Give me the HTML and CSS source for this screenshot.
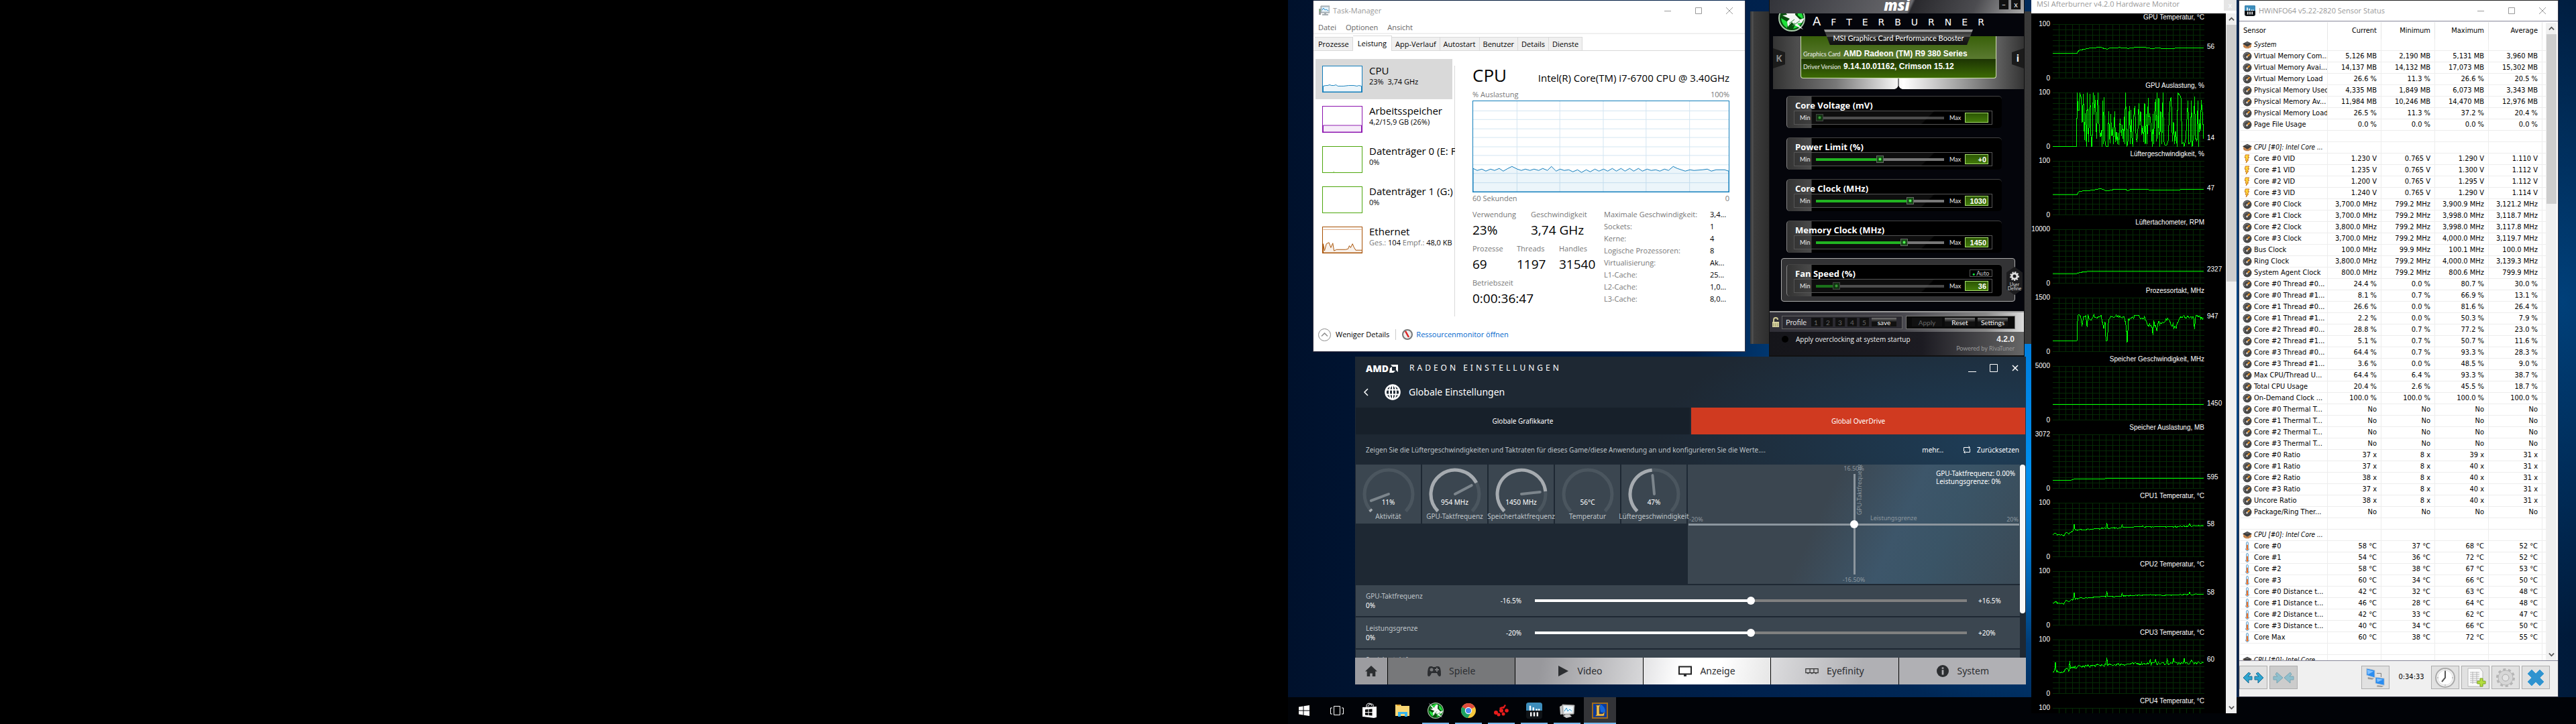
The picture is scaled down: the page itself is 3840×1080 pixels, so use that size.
FILE: index.html
```html
<!DOCTYPE html>
<html lang="de">
<head>
<meta charset="utf-8">
<title>Desktop</title>
<link rel="stylesheet" href="styles.css">
</head>
<body>
<svg class="sprite" aria-hidden="true">
  <symbol id="i-taskmgr" viewBox="0 0 16 16"><path d="M0 5h3v9H0z" fill="#9a9a9a"/><path d="M1 6h1v3H1z" fill="#5fd35f"/><path d="M3 1h13v10H3z" fill="#c9d3da" stroke="#8a949b"/><path d="M5 3h9v6H5z" fill="#eaf6fd"/><path d="M5 7l2-3 2 3 2-1 3 2" fill="none" stroke="#2a8fd0"/><path d="M8 11h3v2h3v2H5v-2h3z" fill="#a5adb2"/></symbol>
  <symbol id="i-min" viewBox="0 0 12 12"><path d="M1 6.500h10" stroke="currentColor" fill="none"/></symbol>
  <symbol id="i-max" viewBox="0 0 12 12"><path d="M1.500 1.500h9v9h-9z" stroke="currentColor" fill="none"/></symbol>
  <symbol id="i-close" viewBox="0 0 12 12"><path d="M1 1l10 10M11 1L1 11" stroke="currentColor" fill="none"/></symbol>
  <symbol id="i-gauge" viewBox="0 0 14 14"><circle cx="7" cy="7" r="6.500" fill="#484848"/><path d="M3 9.500A4.500 4.500 0 0 1 9 3" fill="none" stroke="#999" stroke-width="1.200" stroke-dasharray="1.500 1"/><path d="M6.500 8L10.500 4" stroke="#f39a2c" stroke-width="1.800"/><circle cx="6.500" cy="8" r="1.500" fill="#ccc"/></symbol>
  <symbol id="i-chip" viewBox="0 0 16 14"><path d="M1 5l7 4v4l-2 0-5-3zM15 5L8 9v4l2 0 5-3z" fill="#e0a068"/><path d="M3 8v4M5.500 9v4M8 10v3M10.500 9v4M13 8v4" stroke="#9a5b2b"/><path d="M0 5l8-4 8 4-8 5z" fill="#3c3c3c"/><path d="M4 4l4-2 4 2-4 1z" fill="#666"/></symbol>
  <symbol id="i-bolt" viewBox="0 0 10 15"><path d="M2 1h6l-2 4h2L5 9h2L3 14l1-4H2l1-4H1z" fill="#ffd83a" stroke="#c9731a"/></symbol>
  <symbol id="i-temp" viewBox="0 0 10 15"><path d="M3.500 2a1.500 1.500 0 0 1 3 0v8a2.500 2.500 0 1 1-3 0z" fill="#eaf4fc" stroke="#5c9cc8"/><path d="M5 5v7" stroke="#f26a1b" stroke-width="2"/><circle cx="5" cy="12" r="1.600" fill="#f26a1b"/></symbol>
  <symbol id="i-hwinfo" viewBox="0 0 20 20"><rect width="20" height="20" rx="3" fill="#101418"/><path d="M3 0h14a3 3 0 0 1 3 3v7H0V3a3 3 0 0 1 3-3z" fill="#3d8dbb"/><path d="M4 4h2v6H4zM8 6h2v4H8zM12 8h2v2h-2zM15 8h2v2h-2zM5 12h2v5H5zM9 12h2v5H9zM13 12h2v5h-2z" fill="#fff"/></symbol>
  <symbol id="i-jet" viewBox="0 0 40 40"><circle cx="20" cy="20" r="19" fill="#064d0c" stroke="#a9c9aa" stroke-width="2"/><path d="M6 12q6-8 18-9l-2 8zM28 6q9 6 9 16l-8-6zM4 20q1 10 9 15l1-9zM22 36q8-1 13-9l-9 1z" fill="#1fe03a"/><path d="M3 1L16 13L21 6L26 5L25 15L32 22L39 20L35 27L28 28L37 37L25 31L20 26L14 33L13 25L17 21L6 16L13 15Z" fill="#f3f6f3"/><path d="M16 28L24 22M22 31L32 24M24 27l-3 5" stroke="#2a8a36" fill="none"/></symbol>
</svg>

<main class="desktop">
<section class="screen screen-off" aria-label="Monitor 1"></section>
<section class="screen screen-on" aria-label="Monitor 2">

<!-- Task-Manager -->
<article class="win taskmgr">
  <header class="titlebar">
    <svg class="ic16"><use href="#i-taskmgr"/></svg><span class="title">Task-Manager</span>
    <button aria-label="Minimieren"><svg><use href="#i-min"/></svg></button>
    <button aria-label="Maximieren"><svg><use href="#i-max"/></svg></button>
    <button aria-label="Schließen"><svg><use href="#i-close"/></svg></button>
  </header>
  <nav class="menu"><button>Datei</button><button>Optionen</button><button>Ansicht</button></nav>
  <nav class="tabs"><button>Prozesse</button><button class="on">Leistung</button><button>App-Verlauf</button><button>Autostart</button><button>Benutzer</button><button>Details</button><button>Dienste</button></nav>
  <div class="tm-body">
    <ul class="res">
      <li class="sel"><svg class="thumb blue" viewBox="0 0 60 40"><path class="area" d="M0 31l4-1 3 0 3-1 3 1 4 0 3-1 3 2h5l4 0 8-1h8l5 1 3-1 4 1V40H0z"/></svg><div><h3>CPU</h3><p>23%&nbsp; 3,74 GHz</p></div></li>
      <li><svg class="thumb purple" viewBox="0 0 60 40"><path class="area" d="M0 29.500H60V40H0z"/></svg><div><h3>Arbeitsspeicher</h3><p>4,2/15,9 GB (26%)</p></div></li>
      <li><svg class="thumb green" viewBox="0 0 60 40"><path class="area" d="M16 39h1"/></svg><div><h3>Datenträger 0 (E: F</h3><p>0%</p></div></li>
      <li><svg class="thumb green" viewBox="0 0 60 40"></svg><div><h3>Datenträger 1 (G:)</h3><p>0%</p></div></li>
      <li><svg class="thumb brown" viewBox="0 0 60 40"><path class="area" d="M0 26l2 11 3-11 4-2 3 8 3-7 2 12 4-2h14l4-1 2-5 2 3 3-6 2 5 3 5h10V40H0z"/><path d="M0 3.500H60" stroke="#d9a37c"/></svg><div><h3>Ethernet</h3><p><i>Ges.:</i> 104 <i>Empf.:</i> 48,0 KB</p></div></li>
    </ul>
    <section class="perf">
      <div class="perf-head"><h1>CPU</h1><h2>Intel(R) Core(TM) i7-6700 CPU @ 3.40GHz</h2></div>
      <div class="ends"><span>% Auslastung</span><span>100%</span></div>
      <svg class="cpu" viewBox="0 0 382 136" preserveAspectRatio="none">
        <g stroke="#d4e6f2"><path d="M65.500 0V136M129.500 0V136M194.500 0V136M258.500 0V136M323.500 0V136M0 14.500H382M0 27.500H382M0 41.500H382M0 54.500H382M0 68.500H382M0 81.500H382M0 95.500H382M0 108.500H382M0 122.500H382"/></g>
        <path class="area" d="M0 101L6 104L13 102L19 105L26 102L32 104L39 101L45 105L52 101L58 98L66 102L72 104L78 102L85 104L91 102L98 104L104 101L111 104L117 98L124 105L130 102L136 104L143 103L149 106L156 103L162 107L169 103L175 106L182 102L188 105L195 102L201 105L208 101L214 105L221 101L227 105L234 101L240 105L247 101L253 105L260 102L266 104L273 103L279 105L286 102L292 104L299 98L305 101L317 105L324 103L330 104L343 103L350 102L356 105L363 103L376 103L382 105V136H0Z"/>
      </svg>
      <div class="ends"><span>60 Sekunden</span><span>0</span></div>
      <div class="stats">
        <div class="big">
          <dl class="r1"><div><dt>Verwendung</dt><dd>23%</dd></div><div><dt>Geschwindigkeit</dt><dd>3,74 GHz</dd></div></dl>
          <dl class="r2"><div><dt>Prozesse</dt><dd>69</dd></div><div><dt>Threads</dt><dd>1197</dd></div><div><dt>Handles</dt><dd>31540</dd></div></dl>
          <dl><div><dt>Betriebszeit</dt><dd>0:00:36:47</dd></div></dl>
        </div>
        <dl class="small"><dt>Maximale Geschwindigkeit:</dt><dd>3,4...</dd><dt>Sockets:</dt><dd>1</dd><dt>Kerne:</dt><dd>4</dd><dt>Logische Prozessoren:</dt><dd>8</dd><dt>Virtualisierung:</dt><dd>Ak...</dd><dt>L1-Cache:</dt><dd>25...</dd><dt>L2-Cache:</dt><dd>1,0...</dd><dt>L3-Cache:</dt><dd>8,0...</dd></dl>
      </div>
    </section>
  </div>
  <footer class="tm-foot">
    <button><svg class="ic19" viewBox="0 0 19 19"><circle cx="9.500" cy="9.500" r="9" fill="none" stroke="#8c8c8c"/><path d="M5 11.500l4.500-4.500 4.500 4.500" fill="none" stroke="#8c8c8c" stroke-width="1.500"/></svg>Weniger Details</button>
    <a href="#resmon"><svg class="ic16" viewBox="0 0 16 16"><circle cx="8" cy="8" r="7" fill="#eee" stroke="#777" stroke-width="2"/><path d="M5 3l5 9" stroke="#d22" stroke-width="2.500"/></svg>Ressourcenmonitor öffnen</a>
  </footer>
</article>

<div class="skin-back"></div>

<!-- MSI Afterburner -->
<article class="ab">
  <header class="ab-top">
    <span class="msi">msi</span>
    <div class="ab-btns"><button aria-label="Minimieren">–</button><button aria-label="Schließen">x</button></div>
  </header>
  <div class="ab-brand"><svg class="ball"><use href="#i-jet"/></svg><span>AFTERBURNER</span></div>
  <section class="ab-panel">
    <button class="side k">K</button>
    <div class="lcd">
      <p class="ribbon">MSI Graphics Card Performance Booster</p>
      <dl><dt>Graphics Card</dt><dd>AMD Radeon (TM) R9 380 Series</dd><dt>Driver Version</dt><dd>9.14.10.01162, Crimson 15.12</dd></dl>
    </div>
    <button class="side i">i</button>
    <svg class="notch" viewBox="0 0 12 16"><path d="M5.500 0h1v11q1 4 5.500 5H0q4.500-1 5.500-5z" fill="#04050b"/></svg>
  </section>
  <section class="ab-groups" id="ab-groups"></section>
  <section class="ab-bar">
    <svg class="lock" viewBox="0 0 12 16"><path d="M3 8V4a3 3 0 0 1 6 0" fill="none" stroke="#cfc996" stroke-width="2"/><path d="M1 7h10v8H1z" fill="#d8d3a2"/><path d="M3 9v5M6 9v5M9 9v5" stroke="#8f8a5c"/></svg>
    <div class="profile"><span>Profile</span><button>1</button><button>2</button><button>3</button><button>4</button><button>5</button><button class="lit">save</button></div>
    <div class="actions"><button disabled>Apply</button><button class="lit">Reset</button><button class="lit">Settings</button></div>
  </section>
  <footer class="ab-foot"><label><input type="checkbox">Apply overclocking at system startup</label><b>4.2.0</b><small>Powered by RivaTuner</small></footer>
</article>

<!-- Radeon Einstellungen -->
<article class="amd">
  <header class="amd-top">
    <svg class="amd-logo" viewBox="0 0 48 13" role="img" aria-label="AMD"><text x="0" y="12">AMD</text><path d="M37 1h11v11l-3-3V4h-5zM36 6l-1 7h6l3-3h-5V4z" fill="#fff"/></svg>
    <span class="wide">RADEON EINSTELLUNGEN</span>
    <button aria-label="Minimieren"><svg viewBox="0 0 12 12"><path d="M0 11.500h12" stroke="#fff"/></svg></button>
    <button aria-label="Maximieren"><svg viewBox="0 0 12 12"><path d="M.5.5h11v11H.5z" stroke="#fff" fill="none"/></svg></button>
    <button aria-label="Schließen"><svg viewBox="0 0 12 12"><path d="M2 2l8 8M10 2l-8 8" stroke="#fff" stroke-width="1.500"/></svg></button>
  </header>
  <div class="amd-crumb">
    <button aria-label="Zurück"><svg viewBox="0 0 12 12"><path d="M8 1L3 6l5 5" fill="none" stroke="#fff" stroke-width="1.500"/></svg></button>
    <svg class="globe" viewBox="0 0 24 24"><circle cx="12" cy="12" r="10.500" fill="none" stroke="#fff" stroke-width="2.600"/><ellipse cx="12" cy="12" rx="5" ry="10.500" fill="none" stroke="#fff" stroke-width="2"/><path d="M2 8.500h20M2 15.500h20M12 1v22" stroke="#fff" stroke-width="2"/></svg>
    <h1>Globale Einstellungen</h1>
  </div>
  <nav class="amd-tabs"><button>Globale Grafikkarte</button><button class="on">Global OverDrive</button></nav>
  <div class="amd-desc"><p>Zeigen Sie die Lüftergeschwindigkeiten und Taktraten für dieses Game/diese Anwendung an und konfigurieren Sie die Werte....</p><a href="#mehr">mehr...</a><button><svg viewBox="0 0 12 12"><path d="M1.500 8V2.500h8.500M10.500 4v5.500H2M8.500.5l2 2-2 2M3.500 7.500l-2 2 2 2" fill="none" stroke="#fff"/></svg>Zurücksetzen</button></div>
  <div class="amd-scroll">
    <div class="amd-main">
      <div class="amd-row1">
        <div class="gauges" id="gauges"></div>
        <div class="plane">
          <div class="axis-x"></div><div class="axis-y"></div><div class="knob"></div>
          <span class="pl top">16.50%</span><span class="pl bottom">-16.50%</span><span class="pl left">-20%</span><span class="pl right">20%</span>
          <span class="pl xname">Leistungsgrenze</span><span class="pl yname">GPU-Taktfrequenz</span>
          <p>GPU-Taktfrequenz: 0.00%<br>Leistungsgrenze: 0%</p>
        </div>
      </div>
      <div class="srow"><label for="s-gpu">GPU-Taktfrequenz<b>0%</b></label><span>-16.5%</span><input id="s-gpu" type="range" value="50"><span class="hi">+16.5%</span></div>
      <div class="srow"><label for="s-pow">Leistungsgrenze<b>0%</b></label><span>-20%</span><input id="s-pow" type="range" value="50"><span class="hi">+20%</span></div>
      <div class="srow cut"><label>Speichertaktfrequenz</label></div>
    </div>
    <div class="amd-sb"></div>
  </div>
  <nav class="amd-nav">
    <button class="home" aria-label="Start"><svg viewBox="0 0 20 20"><path d="M10 1L0 10.500h3V19h5v-5h4v5h5v-8.500h3z"/></svg></button>
    <button class="games"><svg viewBox="0 0 20 16"><path d="M4 1h3l1 1h4l1-1h3q4 0 4 12 0 3-2 3t-4-5H6q-2 5-4 5t-2-3Q0 1 4 1z"/><circle cx="6" cy="6" r="2.500" fill="#77787a"/><path d="M13 3h2v2h2v2h-2v2h-2V7h-2V5h2z" fill="#77787a"/></svg>Spiele</button>
    <button class="video"><svg viewBox="0 0 20 16"><path d="M3 0l15 8-15 8z"/></svg>Video</button>
    <button class="anz"><svg viewBox="0 0 20 16"><path d="M1 1.500h18v11H1z" fill="none" stroke="#222" stroke-width="2"/><path d="M8 13h4v3H8z"/></svg>Anzeige</button>
    <button class="eye"><svg viewBox="0 0 24 16"><path d="M1 4h22v7H1zM8.500 4v7M15.500 4v7" fill="none" stroke="#333" stroke-width="1.500"/><path d="M4 11h2v2H4zM11 11h2v2h-2zM18 11h2v2h-2z"/></svg>Eyefinity</button>
    <button class="sys"><svg viewBox="0 0 20 20"><circle cx="10" cy="10" r="10"/><path d="M8.500 4h3v2.500h-3zM8.500 8h3v8h-3z" fill="#b0b0b4"/></svg>System</button>
  </nav>
</article>

<!-- Hardware Monitor -->
<article class="hm">
  <header><span>MSI Afterburner v4.2.0 Hardware Monitor</span><button aria-label="Schließen">x</button></header>
  <div class="hm-body"><div class="charts" id="charts"></div>
    <div class="sb"><svg viewBox="0 0 10 8"><path d="M1 6l4-4 4 4" fill="none" stroke="#555" stroke-width="2"/></svg><i></i><svg viewBox="0 0 10 8"><path d="M1 2l4 4 4-4" fill="none" stroke="#555" stroke-width="2"/></svg></div></div>
</article>

<!-- HWiNFO64 -->
<article class="win hw">
  <header class="titlebar">
    <svg class="ic16"><use href="#i-hwinfo"/></svg><span class="title">HWiNFO64 v5.22-2820 Sensor Status</span>
    <button aria-label="Minimieren"><svg><use href="#i-min"/></svg></button>
    <button aria-label="Maximieren"><svg><use href="#i-max"/></svg></button>
    <button aria-label="Schließen"><svg><use href="#i-close"/></svg></button>
  </header>
  <div class="hw-body">
    <div class="hw-view"><table><thead><tr><th>Sensor</th><th>Current</th><th>Minimum</th><th>Maximum</th><th>Average</th><th></th></tr></thead><tbody id="sensors"></tbody></table></div>
    <div class="sb"><svg viewBox="0 0 10 8"><path d="M1 6l4-4 4 4" fill="none" stroke="#555" stroke-width="2"/></svg><i></i><svg viewBox="0 0 10 8"><path d="M1 2l4 4 4-4" fill="none" stroke="#555" stroke-width="2"/></svg></div>
  </div>
  <footer class="hw-bar">
    <button aria-label="Erweitern"><svg viewBox="0 0 32 18"><path d="M9 1L1 9l8 8v-5h5V7H8l4-4zM23 1l8 8-8 8v-5h-5V7h6l-4-4z" fill="#2ea5cf" stroke="#1a6f97"/></svg></button>
    <button class="off" aria-label="Verkleinern"><svg viewBox="0 0 32 18"><path d="M6 1l9 8-9 8V12H1V7h6L4 4zM26 1l-9 8 9 8V12h5V7h-6l3-3z" fill="#8fbfcd" stroke="#7aa5b3"/></svg></button>
    <button class="net" aria-label="Netzwerk"><svg viewBox="0 0 34 32"><path d="M19 9h7v6" fill="none" stroke="#777"/><path d="M3 1l13 3v12L3 12z" fill="#2a8cf0" stroke="#ccc"/><path d="M5 15l10 2-3 2-7-1zM20 28l10 1-3 2-8-1z" fill="#999"/><path d="M17 15l14 2v11l-14-3z" fill="#2a8cf0" stroke="#ccc"/><path d="M4 3l10 3-9 5zM19 17l10 2-9 4z" fill="#7fc0ff"/></svg></button>
    <time>0:34:33</time>
    <button aria-label="Uhr"><svg viewBox="0 0 32 32"><circle cx="16" cy="16" r="14" fill="#f4f4f4" stroke="#aaa" stroke-width="2"/><circle cx="16" cy="16" r="11" fill="#fff" stroke="#ddd"/><path d="M16 6v10l-5 6" fill="none" stroke="#555" stroke-width="2"/><path d="M16 4v2M16 26v2M4 16h2M26 16h2" stroke="#999"/></svg></button>
    <button aria-label="Protokoll"><svg viewBox="0 0 32 32"><path d="M5 2h18l4 5v22H5z" fill="#fafafa" stroke="#bbb"/><path d="M8 8h14M8 11h14M8 14h14M8 17h14M8 20h14M8 23h14M12 7v18M18 7v18" stroke="#b5b5b5"/><path d="M23 17h4v4h4v4h-4v4h-4v-4h-4v-4h4z" fill="#b4dd3f" stroke="#7ba51f"/></svg></button>
    <button aria-label="Einstellungen"><svg viewBox="0 0 32 32"><circle cx="16" cy="16" r="12" fill="none" stroke="#b5b5b5" stroke-width="4" stroke-dasharray="4 3.500"/><circle cx="16" cy="16" r="8" fill="none" stroke="#d6d6d6" stroke-width="6"/><circle cx="16" cy="16" r="11" fill="none" stroke="#b5b5b5"/><circle cx="16" cy="16" r="5" fill="#e4e4e4" stroke="#aaa"/></svg></button>
    <button aria-label="Schließen"><svg viewBox="0 0 32 32"><path d="M10 4l6 6 6-6 6 6-6 6 6 6-6 6-6-6-6 6-6-6 6-6-6-6z" fill="#2f93cf" stroke="#3f9fd6" stroke-linejoin="round"/></svg></button>
  </footer>
</article>

<!-- Taskleiste -->
<nav class="taskbar">
  <button aria-label="Start"><svg viewBox="0 0 24 24"><path d="M4 6.500l6.500-1v6H4zM11.500 5.300L20 4v7.500h-8.500zM4 12.500h6.500v6L4 17.500zM11.500 12.500H20V20l-8.500-1.300z" fill="#fff"/></svg></button>
  <button aria-label="Taskansicht"><svg viewBox="0 0 24 24"><path d="M7.500 5.500h9v13h-9zM5 8H2.500v9H5M19 8h2.500v9H19" fill="none" stroke="#fff"/></svg></button>
  <button aria-label="Store"><svg viewBox="0 0 24 24"><path d="M7 7V4q1-3 4-3t4 4M9 6q1-4 5-4t3 4" fill="none" stroke="#fff"/><path d="M1 7l21-1v16l-4 1-17-2z" fill="#fff"/><path d="M5 10.500l4.500-.5v4H5zM10.500 10l5-.5V14h-5zM5 15h4.500v4L5 18.500zM10.500 15h5v4.500l-5-.5z" fill="#000"/></svg></button>
  <button aria-label="Explorer"><svg viewBox="0 0 24 24"><path d="M1 3h8l1 2h12v15H1z" fill="#f9d775"/><path d="M3 3h5v2H3z" fill="#e9a52a"/><path d="M5 21v-7h14v7h-4v-4H9v4z" fill="#35b4ee"/></svg></button>
  <button class="run" aria-label="Afterburner"><svg><use href="#i-jet"/></svg></button>
  <button class="run two" aria-label="Chrome"><svg viewBox="0 0 24 24"><circle cx="12" cy="12" r="11" fill="#f6c83c"/><path d="M12 12L2.500 6.500A11 11 0 0 1 21.500 6.500z" fill="#de4b3d"/><path d="M12 12L2.500 6.500A11 11 0 0 0 11 23l5.500-9z" fill="#1da462"/><circle cx="12" cy="12" r="5.200" fill="#fff"/><circle cx="12" cy="12" r="4" fill="#4a8af4"/></svg></button>
  <button class="run" aria-label="Radeon"><svg viewBox="0 0 24 24"><g fill="#e81c1c"><circle cx="12" cy="12" r="3"/><circle cx="4" cy="15" r="3"/><circle cx="8" cy="18" r="2.500"/><circle cx="15" cy="17" r="2.500"/><circle cx="20" cy="12" r="2.800"/><path d="M9 8q3-2 6-2l2-3 2 1-3 5q-4-1-6 1z"/></g></svg></button>
  <button class="run" aria-label="HWiNFO"><svg><use href="#i-hwinfo"/></svg></button>
  <button class="run" aria-label="Task-Manager"><svg viewBox="0 0 24 24"><path d="M1 6l6-3v14l-5 1z" fill="#c4c4c4"/><path d="M5 3l18 1-1 13-16 1z" fill="#d8d8d8" stroke="#999"/><path d="M7 5l14 1-1 9-12 1z" fill="#eef8fd"/><path d="M8 13l3-5 2 5 3-3 3 3" fill="none" stroke="#3a9bd0"/><path d="M10 18h6l3 3-8 2-5-3z" fill="#ccc"/></svg></button>
  <button class="run act" aria-label="League"><svg viewBox="0 0 24 24"><path d="M1 1h22v22H1z" fill="#0b3b9c" stroke="#a06b1c" stroke-width="2"/><path d="M11 2q10 3 9 14l-7-2z" fill="#1667d8"/><path d="M6 4h7l-2 2v11h5l3-3-1 6H5l2-2V6z" fill="#f0c558" stroke="#7a4c10" stroke-width=".7"/></svg></button>
</nav>
</section>
</main>
<script src="script.js"></script>
</body>
</html>
```
FILE: styles.css
```css
* { box-sizing: border-box; }
body { margin: 0; background: #000; font: 11px/16px "Open Sans", "Noto Sans", sans-serif; color: #000; }
h1, h2, h3, p, dl, dd, ul { margin: 0; padding: 0; font-weight: 400; }
ul { list-style: none; }
button { font: inherit; color: inherit; background: none; border: 0; padding: 0; }
svg { display: block; }
.sprite { position: absolute; width: 0; height: 0; }

.desktop { display: grid; grid-template-columns: 1fr 1fr; min-height: 100vh; overflow: hidden; }
.screen { position: relative; overflow: hidden; }
.screen-off { background: #000; }
.screen-on {
  background:
    radial-gradient(90px 260px at 1105px 700px, #0090f0, transparent),
    radial-gradient(500px 500px at 1105px 560px, #0078d8 10%, #00408000 100%),
    radial-gradient(300px 500px at 1900px 450px, #00407a, #00204000),
    linear-gradient(90deg, #00112c, #002350 40%, #002c5c 60%, #001a3a);
}

/* windows */
.win { position: absolute; background: #fff; display: flex; flex-direction: column; border: 1px solid #334; border-width: 0 1px 1px; }
.titlebar { display: flex; align-items: center; height: 30px; color: #999; padding-left: 8px; }
.titlebar .title { flex: 1; margin-left: 5px; }
.titlebar button { width: 46px; }
.titlebar button svg { width: 12px; height: 12px; margin: auto; }
.ic16 { width: 16px; height: 16px; }
.ic19 { width: 19px; height: 19px; }

/* Task-Manager */
.taskmgr { left: 37px; top: 1px; width: 645px; min-height: 523px; }
.menu { display: flex; gap: 14px; padding: 2px 7px; height: 20px; color: #666; border-bottom: 2px solid #f0f0f0; }
.tabs { display: flex; align-items: flex-end; height: 25px; padding-left: 2px; border-bottom: 1px solid #d9d9d9; }
.tabs button { height: 20px; padding: 0 5px; background: #f0f0f0; border: 1px solid #d9d9d9; border-width: 1px 1px 0 0; }
.tabs .on { height: 23px; padding: 0 7px; background: #fff; margin-bottom: -1px; }
.tm-body { display: flex; padding: 12px 23px 0 3px; height: 398px; }
.res { width: 208px; overflow: hidden; background: linear-gradient(#d9d9d9, #d9d9d9) right 10px / 1px 374px no-repeat; }
.res li { display: flex; height: 60px; padding: 10px 0 0 10px; margin-right: 4px; white-space: nowrap; }
.res .sel { background: #d9d9d9; }
.res li div { margin-left: 10px; }
.res h3 { font-size: 15px; line-height: 14px; }
.res p { line-height: 20px; }
.res i { font-style: normal; color: #777; }
.thumb { width: 60px; height: 40px; flex: none; background: #fff; border: 1px solid; }
.area { stroke: currentColor; fill: currentColor; fill-opacity: .08; }
.blue, .cpu { color: #117dbb; }
.purple { color: #8b12ae; }
.green { color: #4da60c; }
.brown { color: #a74f01; }
.perf { flex: 1; margin-left: 26px; }
.perf-head { display: flex; justify-content: space-between; align-items: baseline; padding-top: 4px; white-space: nowrap; }
.perf h1 { font-size: 26px; line-height: 40px; }
.perf h2 { font-size: 15px; }
.ends { display: flex; justify-content: space-between; color: #777; line-height: 18px; }
.cpu { width: 100%; height: 137px; border: 1px solid; }
.stats { display: flex; padding-top: 6px; }
.big { width: 196px; }
.big dl { display: grid; grid-template-columns: 87px 1fr; height: 51px; white-space: nowrap; }
.big .r2 { grid-template-columns: 66px 63px 1fr; }
.stats dt { color: #777; line-height: 18px; }
.big dd { font-size: 19px; line-height: 28px; }
.small { flex: 1; display: grid; grid-template-columns: 158px 1fr; grid-auto-rows: 18px; line-height: 18px; white-space: nowrap; }
.tm-foot { display: flex; align-items: center; height: 50px; padding-left: 7px; }
.tm-foot button, .tm-foot a { display: flex; align-items: center; gap: 7px; }
.tm-foot a { gap: 5px; margin-left: 9px; padding-left: 9px; border-left: 1px solid #ccc; color: #0066cc; text-decoration: none; }

/* Afterburner */
.skin-back { position: absolute; left: 689px; top: 17px; width: 419px; height: 496px; background: linear-gradient(90deg, #333, #555 4px, #3c3c3c 5px, #2e2e2e 28px, #3a3a3a); }
.ab { position: absolute; left: 717px; top: 0; width: 381px; min-height: 532px; background: #04050b; border: solid #111; border-width: 0 1px 2px; color: #eee; font: 11px/14px Lato, "Open Sans", sans-serif; display: flex; flex-direction: column; }
.ab-top { display: flex; justify-content: center; height: 20px; background: linear-gradient(115deg, #33343a, #6a6a6e 55%, #29292d 56%, #4c4c50 80%, #aaa); position: relative; }
.msi { font: italic 800 22px/14px "Open Sans", sans-serif; color: #fff; }
.ab-btns { position: absolute; right: 5px; top: 0; display: flex; gap: 4px; }
.ab-btns button { width: 14px; height: 14px; background: #111; color: #eee; line-height: 12px; }
.ab-brand { display: flex; align-items: center; height: 24px; padding-left: 13px; }
.ball { width: 40px; height: 40px; margin-top: -10px; }
.ab-brand span { margin-left: 11px; font: 14px/20px "DejaVu Sans", sans-serif; letter-spacing: 15px; color: #fff; }
.ab-brand span::first-letter { font-size: 18px; }
.ab-panel { position: relative; display: flex; justify-content: space-between; align-items: flex-start; height: 79px; margin: 10px 0 0 5px; background: linear-gradient(90deg, #333, #777 25%, #eee 48%, #fff 52%, #888 80%, #333); }
.notch { position: absolute; left: 50%; bottom: 0; width: 12px; height: 16px; margin-left: -6px; }
.side { width: 18px; height: 30px; margin-top: 18px; background: #1b1b1b; color: #888; font: 700 14px/30px "Open Sans", sans-serif; clip-path: polygon(0 0, 100% 20%, 100% 80%, 0 100%); }
.side.i { color: #fff; clip-path: polygon(0 20%, 100% 0, 100% 100%, 0 80%); }
.lcd { width: 292px; height: 63px; border: 1px solid #cfe0b0; border-top: 0; border-radius: 0 0 4px 4px; background: linear-gradient(#39600a, #5a7a30 54%, #1d3503 55%, #3c6a04); }
.ribbon { width: 222px; height: 23px; margin: -10px auto 0; text-align: center; line-height: 26px; background: linear-gradient(#888, #aaa 3px, #333 4px, #555 45%, #222 50%, #111); clip-path: polygon(0 0, 100% 0, 96% 100%, 4% 100%); color: #fff; white-space: nowrap; }
.lcd dl { display: grid; grid-template-columns: 60px 1fr; row-gap: 4px; padding: 6px 0 0 3px; line-height: 15px; white-space: nowrap; font-size: 9px; }
.lcd dd { font: 700 12px/15px "Liberation Sans", sans-serif; color: #fff; }
.ab-groups { padding: 10px 13px 0 25px; }
.grp { width: 321px; height: 48px; margin-bottom: 14px; padding: 4px 14px 0 10px; border-radius: 5px; border-top: 1px solid #444; border-left: 1px solid #888; background: linear-gradient(90deg, #333, #4a4a4a 36px, #000 37px); }
.grp header { display: flex; justify-content: space-between; height: 17px; align-items: center; }
.grp h3 { font: 700 13px/16px "Open Sans", sans-serif; color: #fff; margin-left: 2px; }
.auto { width: 34px; height: 11px; border: 1px solid #555; font-size: 9px; line-height: 9px; color: #ccc; white-space: nowrap; }
.auto::before { content: "●"; color: #1e4; font-size: 6px; margin-right: 2px; }
.line { display: flex; align-items: center; height: 21px; padding: 0 5px 0 8px; border: 1px solid #555; background: linear-gradient(135deg, #0000 66%, #000 67%), #2a2a2a55; font-size: 9px; }
.line span { width: 24px; }
.line span + input + span { margin-left: 8px; width: 23px; }
.line input[type=range] { -webkit-appearance: none; appearance: none; width: 192px; height: 12px; margin: 0; background: linear-gradient(90deg, #22b422 var(--v), #777 var(--v)) center / 100% 4px no-repeat; }
.line input[type=range]::-webkit-slider-thumb { -webkit-appearance: none; width: 11px; height: 11px; background: radial-gradient(#5f5 20%, #164d16 40%); border: 1px solid #666; }
.line .dim { opacity: .6; }
.line input[type=text] { width: 35px; height: 15px; padding: 0 2px; border: 1px solid #a6e06a; background: linear-gradient(#2c5604, #437a0a); color: #fff; font: 700 11px/13px "Liberation Sans", sans-serif; text-align: right; }
.fan { position: relative; width: 349px; height: 65px; margin: -6px 0 0 -8px; padding: 8px 0 0 7px; border: 1px solid #aaa; border-radius: 4px; background: #333335; }
.user { position: absolute; right: -12px; top: 12px; width: 24px; height: 42px; background: #1c1c1e; color: #ddd; font-size: 7px; line-height: 6px; clip-path: polygon(50% 0, 100% 20%, 100% 80%, 50% 100%, 0 80%, 0 20%); }
.user svg { width: 14px; height: 14px; margin: 0 auto 2px; }
.ab-bar { display: flex; align-items: center; height: 31px; margin-top: 14px; padding-left: 3px; border-top: 2px solid #999; background: linear-gradient(90deg, #2f2e36, #44434a 50%, #888 85%, #ddd); }
.lock { width: 12px; height: 16px; margin-right: 3px; }
.profile { display: flex; align-items: center; gap: 4px; width: 180px; height: 20px; padding-left: 5px; border: 1px solid #666; background: #2a2930; }
.profile span { font-size: 11px; width: 34px; color: #ddd; }
.ab-bar button { height: 13px; width: 14px; background: #111; color: #666; font-size: 10px; line-height: 12px; }
.ab-bar .profile .lit { width: 37px; }
.ab-bar .lit { background: linear-gradient(#777, #111 50%); color: #fff; }
.actions { display: flex; align-items: center; gap: 4px; width: 163px; height: 20px; margin-left: 5px; padding-left: 8px; background: #0a0a0a; border: 1px solid #777; }
.ab-bar .actions button { flex: none; width: 45px; }
.ab-foot { flex: 1; display: grid; grid-template-columns: 1fr auto; align-content: start; padding: 4px 14px 0 11px; background: linear-gradient(90deg, #15151a, #1c1b22 60%, #666); }
.ab-foot label { display: flex; align-items: center; gap: 11px; font: 10px/14px "Open Sans", sans-serif; }
.ab-foot input { appearance: none; width: 10px; height: 10px; margin: 0 0 0 7px; border-radius: 50%; background: #000; }
.ab-foot b { font: 700 12px/14px "Liberation Sans", sans-serif; text-align: right; }
.ab-foot small { grid-column: 1 / 3; text-align: right; font-size: 9px; color: #999; }

/* Radeon Einstellungen */
.amd { position: absolute; left: 100px; top: 532px; width: 1000px; height: 489px; display: flex; flex-direction: column; color: #fff; font: 10px/14px "Noto Sans", sans-serif; background: radial-gradient(500px 200px at 950px 130px, #1e3d57, #1e3d5700), #1e2833; }
.amd-top { display: flex; align-items: center; height: 34px; padding: 0 10px 0 16px; }
.amd-logo { width: 48px; height: 13px; overflow: visible; }
.amd-logo text { font: 800 14px "Open Sans", sans-serif; fill: #fff; }
.wide { flex: 1; margin-left: 17px; font-size: 12px; letter-spacing: 4px; }
.amd-top button { margin-left: 20px; }
.amd-top button svg { width: 12px; height: 12px; }
.amd-crumb { display: flex; align-items: center; height: 42px; padding: 0 0 4px 11px; }
.amd-crumb button svg { width: 12px; height: 12px; }
.globe { width: 24px; height: 24px; margin: 0 12px 0 21px; }
.amd-crumb h1 { font-size: 14px; line-height: 20px; }
.amd-tabs { display: flex; gap: 2px; padding: 0 1px; }
.amd-tabs button { flex: 1; height: 40px; background: #17202a; }
.amd-tabs .on { background: #d03a20; }
.amd-desc { display: flex; align-items: center; height: 45px; padding: 0 10px 0 16px; }
.amd-desc p { flex: 1; color: #bfc4c8; white-space: nowrap; }
.amd-desc a { color: #fff; text-decoration: none; }
.amd-desc button { display: flex; gap: 9px; align-items: center; margin-left: 29px; }
.amd-desc svg { width: 12px; height: 12px; }
.amd-scroll { display: flex; flex: 1; min-height: 0; padding: 0 1px; overflow: hidden; }
.amd-main { flex: 1; display: flex; flex-direction: column; gap: 2px; }
.amd-row1 { display: flex; gap: 2px; height: 178px; flex: none; }
.gauges { display: grid; grid-template-columns: repeat(5, 97px); gap: 2px; align-items: start; }
.gauge { height: 88px; background: #3b4650; display: flex; flex-direction: column; align-items: center; white-space: nowrap; }
.gauge svg { width: 80px; height: 68px; margin-top: 4px; overflow: visible; fill: none; stroke-width: 5; }
.gauge b { font-weight: 400; margin-top: -23px; line-height: 14px; z-index: 1; }
.gauge span { margin-top: 7px; color: #bfc4c8; line-height: 14px; z-index: 1; }
.plane { position: relative; flex: 1; color: #8d979f; font-size: 9px; background: linear-gradient(115deg, #3b4650 40%, #3d566a 62%, #3a5466 75%, #3b4a56); overflow: hidden; }
.axis-x { position: absolute; left: 1px; right: 1px; top: 88px; height: 3px; background: #8c969e; }
.axis-y { position: absolute; left: 247px; top: 14px; height: 150px; width: 3px; background: #8c969e; }
.knob { position: absolute; left: 242px; top: 83px; width: 12px; height: 12px; border-radius: 50%; background: #fff; }
.pl { position: absolute; line-height: 12px; white-space: nowrap; }
.pl.top { top: 0; left: 0; right: 0; text-align: center; }
.pl.bottom { bottom: 0; left: 0; right: 0; text-align: center; }
.pl.left { top: 76px; left: 2px; }
.pl.right { top: 76px; right: 2px; }
.pl.xname { top: 74px; left: 272px; }
.pl.yname { bottom: 103px; left: 250px; writing-mode: vertical-rl; rotate: 180deg; }
.plane p { position: absolute; right: 7px; top: 7px; color: #fff; font-size: 10px; line-height: 12px; }
.srow { display: flex; align-items: center; height: 46px; flex: none; padding-left: 15px; background: #3b4650; }
.srow label { width: 180px; color: #bfc4c8; }
.srow b { display: block; font-weight: 400; color: #fff; }
.srow span { width: 52px; text-align: right; }
.srow .hi { text-align: left; margin-left: 17px; width: 62px; }
.srow input { appearance: none; flex: 1; height: 12px; margin: 0 0 0 20px; background: linear-gradient(90deg, #fff 50%, #808080 50%) center / 100% 4px no-repeat; }
.srow input::-webkit-slider-thumb { -webkit-appearance: none; width: 12px; height: 12px; border-radius: 50%; background: #fff; }
.srow.cut { align-items: flex-start; padding-top: 8px; }
.amd-sb { width: 8px; height: 222px; border-radius: 4px; background: #f8f8f8; }
.amd-nav { display: grid; grid-template-columns: 48px repeat(5, 1fr); gap: 1px; height: 40px; background: #000; color: #2c2e31; font-size: 14px; }
.amd-nav button { display: flex; align-items: center; justify-content: center; gap: 12px; }
.amd-nav svg { width: 20px; height: 18px; fill: #2c2e31; }
.home { background: #9c9ca0; }
.games { background: #77787a; }
.amd-nav .video { background: linear-gradient(100deg, #98989c 20%, #d8d8da); }
.anz { background: linear-gradient(100deg, #e2e2e4, #fff 30%, #fff 60%, #e6e6e6); }
.eye { background: linear-gradient(100deg, #dcdcde, #b0b0b4 70%); }
.sys { background: #b0b0b4; }

/* Hardware Monitor */
.hm { position: absolute; z-index: 2; left: 1108px; top: 0; width: 306px; height: 1064px; display: flex; flex-direction: column; background: #000; }
.hm header { display: flex; justify-content: space-between; height: 20px; flex: none; padding-left: 8px; background: #fff; color: #999; line-height: 12px; font-size: 11px; }
.hm header button { width: 19px; height: 16px; background: #e5e5e5; color: #fff; }
.hm-body { display: flex; flex: 1; min-height: 0; }
.charts { flex: 1; overflow: hidden; color: #fff; font: 10px/12px "Liberation Sans", sans-serif; }
.chart { display: grid; grid-template-columns: 28px 226px 1fr; column-gap: 4px; height: 102px; }
.chart h3 { grid-column: 1 / 3; text-align: right; font-size: 10px; line-height: 12px; margin-bottom: 4px; }
.scale { grid-column: 1; display: flex; flex-direction: column; justify-content: space-between; height: 93px; margin-top: -6px; text-align: right; direction: rtl; }
.chart svg { width: 226px; height: 81px; fill: none; stroke: #00ff00; background: linear-gradient(#052a05 1px, transparent 1px) 0 0 / 10px 8px, linear-gradient(90deg, #052a05 1px, transparent 1px) 9px 0 / 10px 8px; }
.now { position: relative; }
.now b { position: absolute; left: 0; font-weight: 400; margin-top: -8px; }
.sb { display: flex; flex-direction: column; align-items: center; width: 16px; background: #f0f0f0; }
.sb svg { width: 9px; height: 17px; }
.sb i { width: 15px; height: 383px; margin-bottom: auto; background: #cdcdcd; }

/* HWiNFO64 */
.hw { left: 1417px; top: 0; width: 477px; height: 1040px; border-top: 1px solid #222; }
.hw-body { display: flex; flex: 1; min-height: 0; border: solid #88889a; border-width: 1px 0; }
.hw-view { flex: 1; overflow: hidden; padding: 1px 0 0 1px; }
.hw table { width: 100%; table-layout: fixed; border-collapse: separate; border-spacing: 0; font: 11px/16px "DejaVu Sans Condensed", sans-serif; }
.hw th { height: 26px; padding: 0 6px 0 5px; font-weight: 400; text-align: right; width: 80px; border-right: 1px solid #e5e5e5; }
.hw th:first-child { width: 131px; text-align: left; }
.hw th:last-child { width: auto; border: 0; padding: 0; }
.hw td { height: 17px; padding: 0 6px 0 0; text-align: right; border: solid #ededed; border-width: 0 1px 1px 0; white-space: nowrap; overflow: hidden; }
.hw td:first-child { text-align: left; padding: 0 0 0 4px; }
.hw td:last-child { border-right: 0; padding: 0; }
.cell { display: flex; gap: 3px; align-items: center; height: 16px; }
.cell svg { width: 14px; height: 14px; flex: none; }
.grouprow .cell { font-style: italic; font-size: 10px; }
.hw .sb { margin: 2px 2px 0 0; }
.hw .sb i { height: 253px; }
.hw-bar { display: flex; height: 53px; padding: 7px 9px 0 0; background: #f0f0f0; }
.hw-bar button { display: grid; place-items: center; width: 42px; height: 35px; margin-right: 3px; background: #e1e1e1; border: 1px solid #adadad; }
.hw-bar .off { background: #ccc; }
.hw-bar svg { width: 32px; height: 32px; }
.hw-bar .net { margin-left: auto; }
.hw-bar time { width: 59px; padding-top: 9px; text-align: center; font: 11px/16px "DejaVu Sans Condensed", sans-serif; }

/* Taskleiste */
.taskbar { position: absolute; left: 0; right: 0; bottom: 0; height: 40px; display: flex; gap: 1px; background: #010307; }
.taskbar button { width: 48px; height: 40px; position: relative; }
.taskbar svg { width: 24px; height: 24px; margin: auto; }
.run { background: linear-gradient(#76b9ed, #76b9ed) center bottom / 40px 2px no-repeat; }
.run.act { background: linear-gradient(#76b9ed, #76b9ed) center bottom / 48px 2px no-repeat #333438; }
```
FILE: script.js
```js
// Afterburner sliders: title, fill in percent, shown value
const groups = [
  ["Core Voltage (mV)", 0, "", true],
  ["Power Limit (%)", 50, "+0"],
  ["Core Clock (MHz)", 75, "1030"],
  ["Memory Clock (MHz)", 70, "1450"],
  ["Fan Speed (%)", 14, "36", true],
];
document.getElementById("ab-groups").innerHTML = groups.map(([name, v, text, dim], i) => {
  const fan = i === 4;
  const box = `<div class="grp"><header><h3>${name}</h3>${fan ? '<button class="auto">Auto</button>' : ""}</header>
    <div class="line"><span>Min</span><input type="range" value="${v}" aria-label="${name}" class="${dim ? "dim" : ""}" style="--v:${v}%"><span>Max</span><input type="text" value="${text}" aria-label="${name} Wert"></div></div>`;
  return fan ? `<div class="fan">${box}<button class="user"><svg viewBox="0 0 14 14"><circle cx="7" cy="7" r="4" fill="none" stroke="#ddd" stroke-width="3"/><circle cx="7" cy="7" r="6" fill="none" stroke="#ddd" stroke-width="2" stroke-dasharray="2 2"/></svg>User<br>Define</button></div>` : box;
}).join("");

// Radeon gauges: label, text, filled fraction of the 270 degree arc, needle fraction
const polar = (r, f) => {
  const a = (135 + 270 * f) * Math.PI / 180;
  return [40 + r * Math.cos(a), 40 + r * Math.sin(a)].map(n => n.toFixed(1)).join(" ");
};
const arc = f => `M${polar(36, 0)}A36 36 0 ${f > .667 ? 1 : 0} 1 ${polar(36, f)}`;
document.getElementById("gauges").innerHTML = [
  ["Aktivität", "11%", .02, .09], ["GPU-Taktfrequenz", "954 MHz", .73, .73], ["Speichertaktfrequenz", "1450 MHz", .81, .81],
  ["Temperatur", "56°C", 0, null], ["Lüftergeschwindigkeit", "47%", .48, .48],
].map(([label, text, f, n]) => `<div class="gauge"><svg viewBox="0 0 80 68"><path d="${arc(1)}" stroke="#4b565f"/>${f ? `<path d="${arc(f)}" stroke="#a6abb0"/>` : ""}${n === null ? "" : `<path d="M40 40L${polar(28, n)}" stroke="#7c858c" stroke-width="4" stroke-linecap="round"/>`}</svg><b>${text}</b><span>${label}</span></div>`).join("");

// Hardware monitor: x runs 0..675, value in percent of the scale
let seed = 7;
const rnd = () => (seed = (seed * 16807) % 2147483647) / 2147483647;
const pts = s => s.split(" ").map(p => p.split(",").map(Number));
const jitter = (s, amp, peaks) => {
  const base = pts(s), out = [];
  for (let i = 1; i < base.length; i++) {
    const [x0, y0] = base[i - 1], [x1, y1] = base[i];
    for (let x = x0; x < x1; x += 4) out.push([x, y0 + (y1 - y0) * (x - x0) / (x1 - x0) + (rnd() - .5) * amp]);
  }
  (peaks || []).forEach(([x, h]) => { const p = out.find(q => q[0] >= x); if (p) p[1] = h; });
  out.push(base[base.length - 1]);
  return out;
};
const load = "0,0 107,0 109,100 113,68 118,68 121,100 128,90 132,45 137,98 142,12 145,62 151,0 154,100 160,8 167,98 172,0 176,0 181,100 185,60 188,95 192,65 196,14 202,100 208,30 213,18 218,30 221,0 224,85 226,5 229,92 234,10 238,0 247,0 250,65 253,30 256,6 259,60 264,20 268,35 272,5 277,65 281,8 285,27 289,5 292,25 296,3 301,52 307,20 311,40 316,8 320,55 322,5 325,100 329,50 332,0 337,12 343,75 347,5 350,68 353,20 358,0 362,55 367,76 372,25 376,8 380,20 385,80 389,40 393,65 398,22 403,38 407,8 411,80 414,5 419,60 422,5 427,90 430,40 433,62 437,50 443,15 446,0 448,60 451,5 455,60 460,88 464,10 466,100 470,15 474,90 478,0 483,65 488,5 493,100 497,10 502,2 510,3 516,10 521,58 526,90 530,91 535,10 540,45 545,5 549,28 554,12 556,0 559,100 569,95 574,90 578,5 584,8 588,0 595,15 605,85 609,5 615,8 620,85 624,0 630,20 634,93 639,15 645,10 649,85 653,0 655,50 661,30 664,87 670,60 675,14";
const clock = jitter("0,20 108,20", 0).concat(
  jitter("112,67 125,66 130,48 138,66 148,66 154,44 158,67 170,58 184,68 200,62 216,68 228,44 234,55 238,20", 5),
  jitter("244,20 248,52 256,63 300,66 322,62 331,38 333,20 338,58 350,64 410,65 425,48 440,50 448,34 452,58 466,36 470,56 482,50 510,62 530,52 548,44 560,52 575,65 630,63 634,44 638,64 675,63", 8));
const cpu = "0,41 14,44 20,41 50,40 60,46 72,43 84,47 96,48 110,50 150,51 230,53 290,54 400,56 540,56 600,57 675,58";
const charts = [
  ["GPU Temperatur, °C", 100, 56, pts("0,46 109,46 113,50 120,52 132,53 145,54 150,55 170,56 200,57 213,58 222,56 245,54 255,56 300,57 330,56 337,55 345,56 365,57 415,57 425,56 450,55 460,56 520,55 560,56 675,56"), 56],
  ["GPU Auslastung, %", 100, 14, pts(load), 14],
  ["Lüftergeschwindigkeit, %", 100, 47, pts("0,38 109,38 114,42 120,44 150,45 180,46 215,49 238,45 250,45 270,47 325,48 335,45 350,48 425,48 432,46 510,46 580,47 675,47"), 47],
  ["Lüftertachometer, RPM", 10000, 2327, pts("0,18 108,18 120,20 155,22 180,23 235,23 240,22 255,23 330,23 335,22 445,23 510,22 580,23 675,23"), 23],
  ["Prozessortakt, MHz", 1500, 947, clock, 63],
  ["Speicher Geschwindigkeit, MHz", 5000, 1450, pts("0,29 675,29"), 29],
  ["Speicher Auslastung, MB", 3072, 595, pts("0,15 80,15 85,16 105,18 175,18 675,19"), 19],
  ["CPU1 Temperatur, °C", 100, 58, jitter(cpu, 2, [[96, 61], [242, 63], [310, 59], [610, 62]]), 58],
  ["CPU2 Temperatur, °C", 100, 58, jitter(cpu, 2, [[96, 61], [242, 63], [310, 59], [610, 62]]), 58],
  ["CPU3 Temperatur, °C", 100, 60, jitter(cpu, 5, [[12, 58], [76, 60], [240, 67], [436, 64], [460, 64], [510, 65], [538, 65], [586, 65], [620, 62]]), 60],
  ["CPU4 Temperatur, °C", 100, "", [], 0],
];
document.getElementById("charts").innerHTML = charts.map(([name, max, now, p, at]) => `<section class="chart"><h3>${name}</h3><div class="scale"><span>${max}</span><span>0</span></div><svg viewBox="0 0 678 81" preserveAspectRatio="none"><polyline vector-effect="non-scaling-stroke" shape-rendering="crispEdges" points="${p.map(([x, y]) => x + "," + (80.5 - y * .8).toFixed(1)).join(" ")}"/></svg><div class="now"><b style="top:${Math.round(81 - at * .81)}px">${now}</b></div></section>`).join("");

// HWiNFO sensors: icon | name | current | minimum | maximum | average
const sensors = `chip|System
gauge|Virtual Memory Com...|5,126 MB|2,190 MB|5,131 MB|3,960 MB
gauge|Virtual Memory Avai...|14,137 MB|14,132 MB|17,073 MB|15,302 MB
gauge|Virtual Memory Load|26.6 %|11.3 %|26.6 %|20.5 %
gauge|Physical Memory Used|4,335 MB|1,849 MB|6,073 MB|3,343 MB
gauge|Physical Memory Av...|11,984 MB|10,246 MB|14,470 MB|12,976 MB
gauge|Physical Memory Load|26.5 %|11.3 %|37.2 %|20.4 %
gauge|Page File Usage|0.0 %|0.0 %|0.0 %|0.0 %
|
chip|CPU [#0]: Intel Core ...
bolt|Core #0 VID|1.230 V|0.765 V|1.290 V|1.110 V
bolt|Core #1 VID|1.235 V|0.765 V|1.300 V|1.112 V
bolt|Core #2 VID|1.200 V|0.765 V|1.295 V|1.112 V
bolt|Core #3 VID|1.240 V|0.765 V|1.290 V|1.114 V
gauge|Core #0 Clock|3,700.0 MHz|799.2 MHz|3,900.9 MHz|3,121.2 MHz
gauge|Core #1 Clock|3,700.0 MHz|799.2 MHz|3,998.0 MHz|3,118.7 MHz
gauge|Core #2 Clock|3,800.0 MHz|799.2 MHz|3,998.0 MHz|3,117.8 MHz
gauge|Core #3 Clock|3,700.0 MHz|799.2 MHz|4,000.0 MHz|3,119.7 MHz
gauge|Bus Clock|100.0 MHz|99.9 MHz|100.1 MHz|100.0 MHz
gauge|Ring Clock|3,800.0 MHz|799.2 MHz|4,000.0 MHz|3,139.3 MHz
gauge|System Agent Clock|800.0 MHz|799.2 MHz|800.6 MHz|799.9 MHz
gauge|Core #0 Thread #0...|24.4 %|0.0 %|80.7 %|30.0 %
gauge|Core #0 Thread #1...|8.1 %|0.7 %|66.9 %|13.1 %
gauge|Core #1 Thread #0...|26.6 %|0.0 %|81.6 %|26.4 %
gauge|Core #1 Thread #1...|2.2 %|0.0 %|50.3 %|7.9 %
gauge|Core #2 Thread #0...|28.8 %|0.7 %|77.2 %|23.0 %
gauge|Core #2 Thread #1...|5.1 %|0.7 %|50.7 %|11.6 %
gauge|Core #3 Thread #0...|64.4 %|0.7 %|93.3 %|28.3 %
gauge|Core #3 Thread #1...|3.6 %|0.0 %|48.5 %|9.0 %
gauge|Max CPU/Thread U...|64.4 %|6.4 %|93.3 %|38.7 %
gauge|Total CPU Usage|20.4 %|2.6 %|45.5 %|18.7 %
gauge|On-Demand Clock ...|100.0 %|100.0 %|100.0 %|100.0 %
gauge|Core #0 Thermal T...|No|No|No|No
gauge|Core #1 Thermal T...|No|No|No|No
gauge|Core #2 Thermal T...|No|No|No|No
gauge|Core #3 Thermal T...|No|No|No|No
gauge|Core #0 Ratio|37 x|8 x|39 x|31 x
gauge|Core #1 Ratio|37 x|8 x|40 x|31 x
gauge|Core #2 Ratio|38 x|8 x|40 x|31 x
gauge|Core #3 Ratio|37 x|8 x|40 x|31 x
gauge|Uncore Ratio|38 x|8 x|40 x|31 x
gauge|Package/Ring Ther...|No|No|No|No
|
chip|CPU [#0]: Intel Core ...
temp|Core #0|58 °C|37 °C|68 °C|52 °C
temp|Core #1|54 °C|36 °C|72 °C|52 °C
temp|Core #2|58 °C|38 °C|67 °C|53 °C
temp|Core #3|60 °C|34 °C|66 °C|50 °C
temp|Core #0 Distance t...|42 °C|32 °C|63 °C|48 °C
temp|Core #1 Distance t...|46 °C|28 °C|64 °C|48 °C
temp|Core #2 Distance t...|42 °C|33 °C|62 °C|47 °C
temp|Core #3 Distance t...|40 °C|34 °C|66 °C|50 °C
temp|Core Max|60 °C|38 °C|72 °C|55 °C
|
chip|CPU [#0]: Intel Core ...`;
document.getElementById("sensors").innerHTML = sensors.split("\n").map(row => {
  const [icon, name, ...v] = row.split("|");
  const first = icon ? `<div class="cell"><svg><use href="#i-${icon}"/></svg>${name}</div>` : "";
  return `<tr class="${icon === "chip" ? "grouprow" : ""}"><td>${first}</td>${[0, 1, 2, 3].map(i => `<td>${v[i] || ""}</td>`).join("")}<td></td></tr>`;
}).join("");
```
